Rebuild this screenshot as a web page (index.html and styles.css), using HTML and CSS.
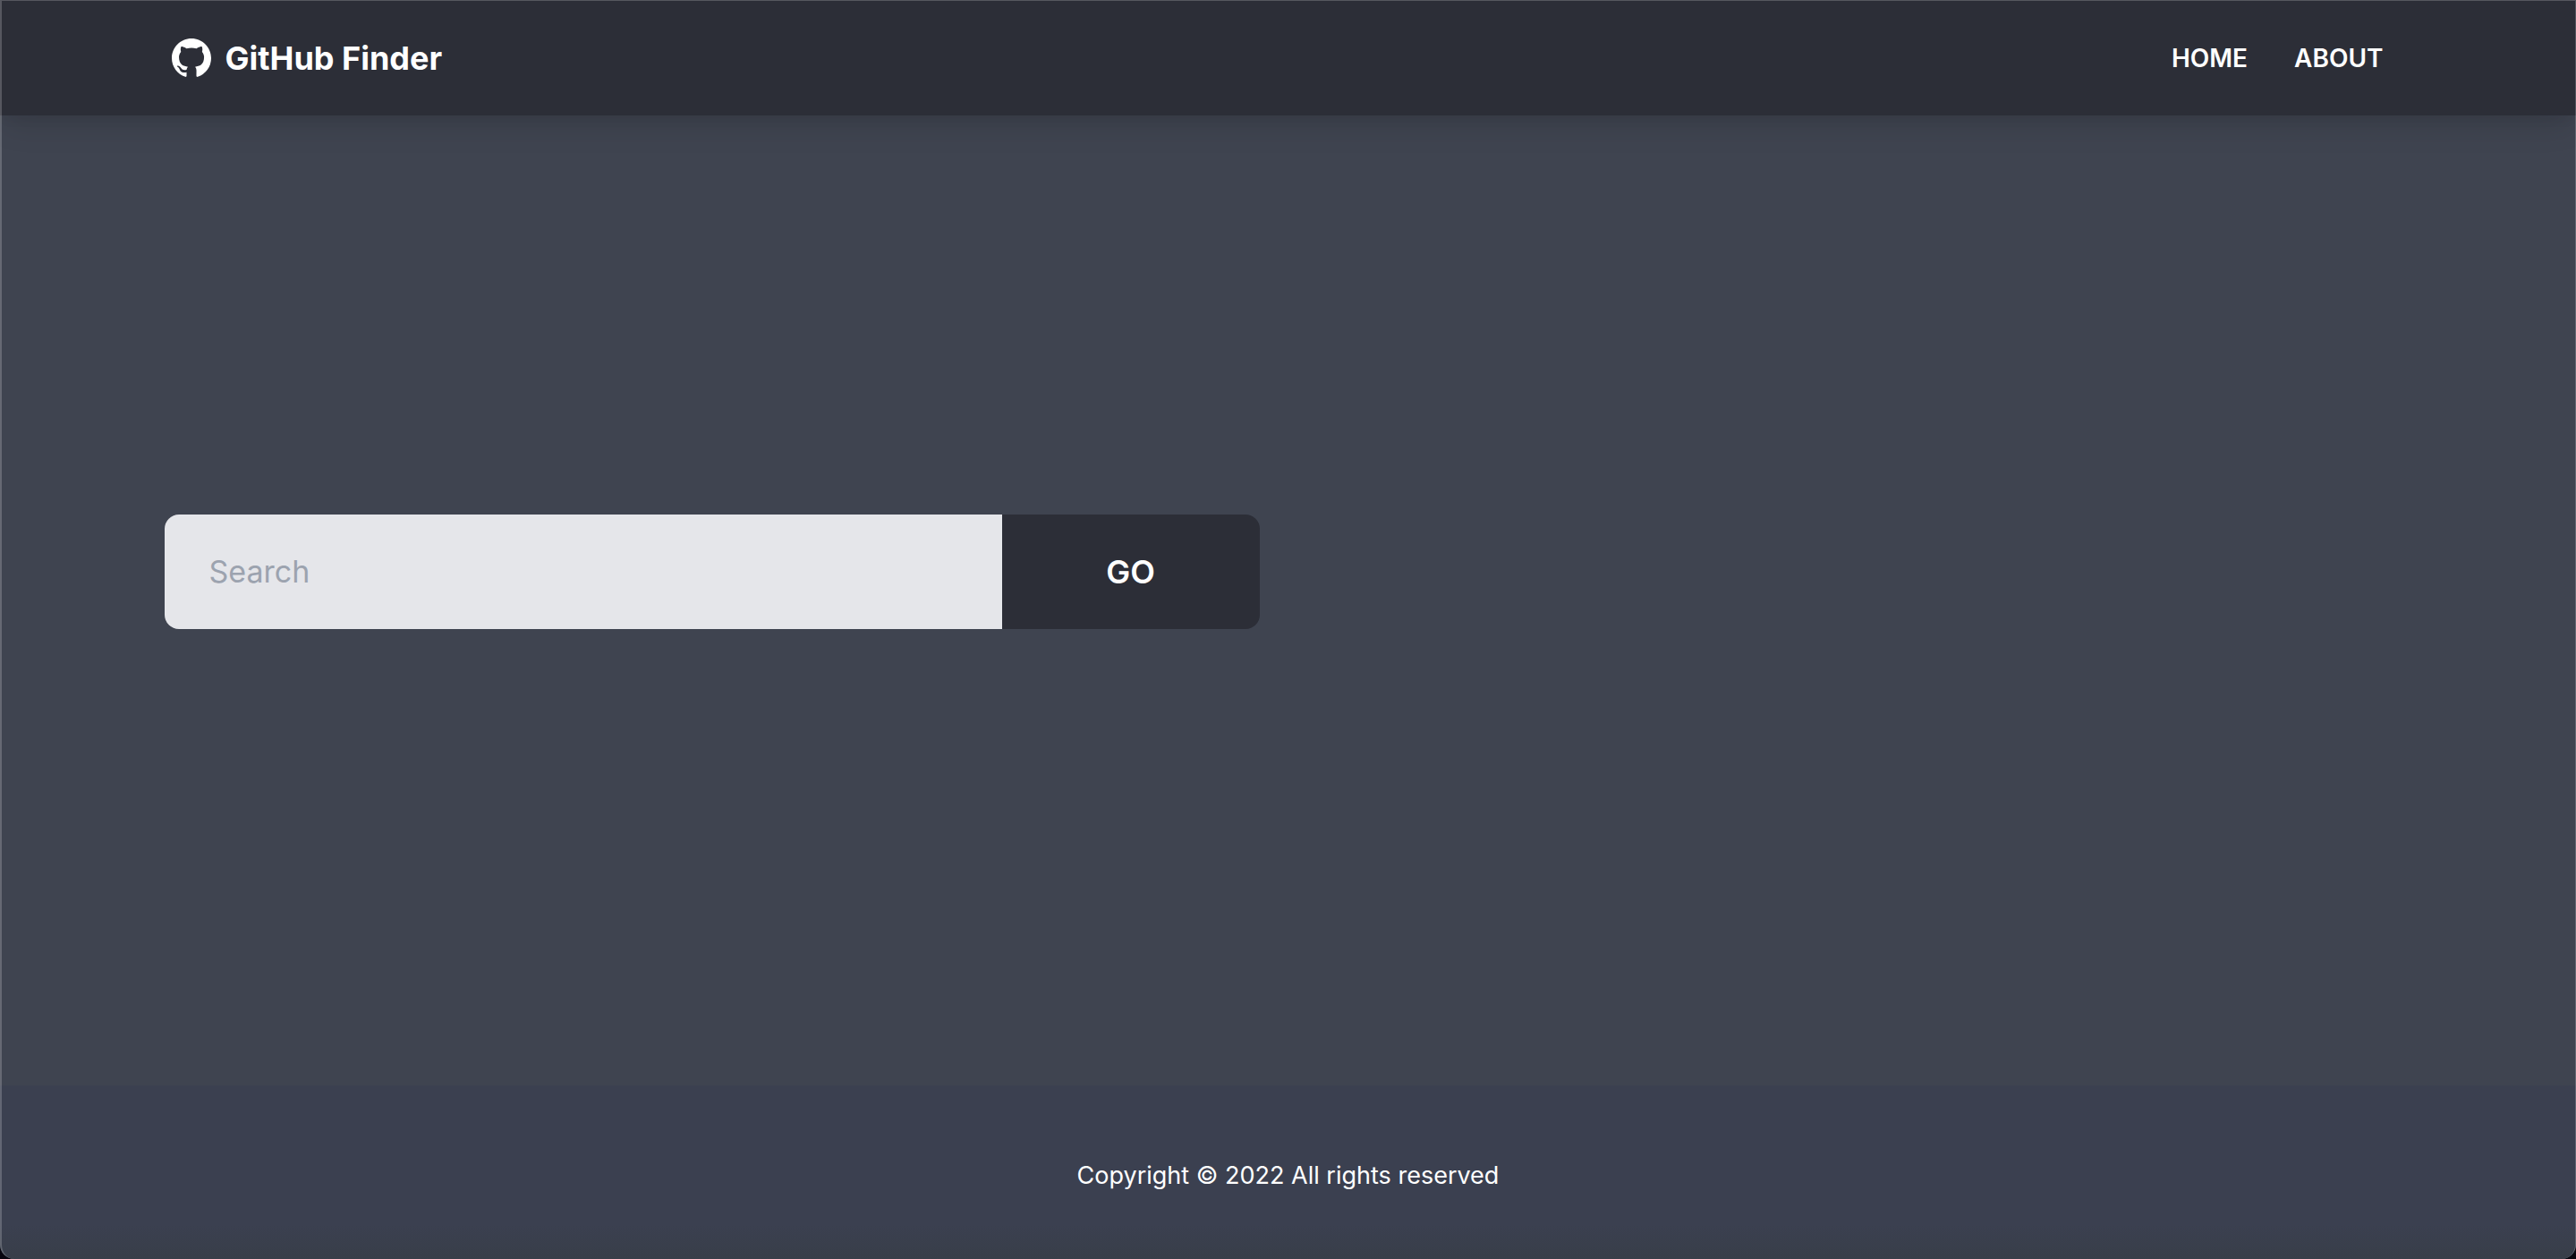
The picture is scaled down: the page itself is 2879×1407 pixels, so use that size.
FILE: index.html
```html
<!DOCTYPE html>
<html lang="en">
<head>
<meta charset="utf-8">
<meta name="viewport" content="width=device-width, initial-scale=1">
<title>GitHub Finder</title>
<link rel="stylesheet" href="styles.css">
</head>
<body>
<div class="app">
  <header class="navbar">
    <div class="navbar-inner">
      <a class="brand" href="#">
        <svg class="brand-icon" viewBox="0 0 16 16" aria-hidden="true"><path fill="currentColor" d="M8 0C3.58 0 0 3.58 0 8c0 3.54 2.29 6.53 5.47 7.59.4.07.55-.17.55-.38 0-.19-.01-.82-.01-1.49-2.01.37-2.53-.49-2.69-.94-.09-.23-.48-.94-.82-1.13-.28-.15-.68-.52-.01-.53.63-.01 1.08.58 1.23.82.72 1.21 1.87.87 2.33.66.07-.52.28-.87.51-1.07-1.78-.2-3.64-.89-3.64-3.95 0-.87.31-1.59.82-2.15-.08-.2-.36-1.02.08-2.12 0 0 .67-.21 2.2.82.64-.18 1.32-.27 2-.27s1.36.09 2 .27c1.53-1.04 2.2-.82 2.2-.82.44 1.1.16 1.92.08 2.12.51.56.82 1.27.82 2.15 0 3.07-1.87 3.75-3.65 3.95.29.25.54.73.54 1.48 0 1.07-.01 1.93-.01 2.2 0 .21.15.46.55.38A8.01 8.01 0 0 0 16 8c0-4.42-3.58-8-8-8z"/></svg>
        <span>GitHub Finder</span>
      </a>
      <nav class="nav-links">
        <a href="#">HOME</a>
        <a href="#">ABOUT</a>
      </nav>
    </div>
  </header>
  <main class="content">
    <form class="search">
      <input class="search-input" type="text" placeholder="Search" aria-label="Search">
      <button class="search-button" type="button">GO</button>
    </form>
  </main>
  <footer class="footer">
    <p>Copyright © 2022 All rights reserved</p>
  </footer>
</div>
</body>
</html>
```
FILE: styles.css
```css
* {
  box-sizing: border-box;
}

html {
  background: #08060f;
}

body {
  margin: 0;
  font-family: Inter, "Liberation Sans", sans-serif;
  font-size: 28px;
  line-height: 40px;
  color: #fff;
}

.app {
  position: relative;
  display: flex;
  flex-direction: column;
  min-height: 100vh;
  overflow: hidden;
  background: #3f4450;
  border-radius: 0 0 16px 16px;
}

/* Thin light edge around the window */
.app::after {
  content: "";
  position: absolute;
  inset: 0;
  border: solid rgba(255, 255, 255, 0.2);
  border-width: 1px 1px 0 2px;
  border-radius: inherit;
  pointer-events: none;
}

.navbar {
  background: #2c2e37;
  padding-top: 1px;
  box-shadow: 0 20px 30px -6px rgba(0, 0, 0, 0.1), 0 8px 12px -4px rgba(0, 0, 0, 0.06);
}

.navbar-inner,
.content {
  width: 100%;
  max-width: 2560px;
  margin: 0 auto;
}

.navbar-inner {
  display: flex;
  align-items: center;
  justify-content: space-between;
  min-height: 128px;
  padding: 0 32px;
}

a {
  color: inherit;
  text-decoration: none;
}

.brand {
  display: flex;
  align-items: center;
  gap: 16px;
  font-size: 36px;
  font-weight: 700;
}

.brand-icon {
  width: 44px;
  height: 44px;
}

.nav-links {
  display: flex;
  gap: 4px;
  font-weight: 600;
}

.nav-links a {
  padding: 0 24px;
}

.content {
  flex: 1;
  display: grid;
  grid-template-columns: 1fr 1fr;
  column-gap: 64px;
  align-items: center;
  padding: 24px 24px 88px;
}

.search {
  display: flex;
  height: 128px;
}

.search-input {
  flex: 1;
  min-width: 0;
  border: 0;
  border-radius: 16px 0 0 16px;
  padding: 0 50px;
  background: #e5e6ea;
  color: #111;
  font: inherit;
  font-size: 34px;
}

.search-input::placeholder {
  color: #9ca3af;
  opacity: 1;
}

.search-button {
  width: 288px;
  border: 0;
  border-radius: 0 16px 16px 0;
  background: #2c2e37;
  color: #fff;
  font: inherit;
  font-size: 36px;
  font-weight: 600;
}

.footer {
  display: flex;
  align-items: center;
  justify-content: center;
  min-height: 194px;
  padding: 80px 80px 72px;
  background: linear-gradient(#3b4050 80%, #383e49);
  font-size: 27px;
}

.footer p {
  margin: 0;
}
```
